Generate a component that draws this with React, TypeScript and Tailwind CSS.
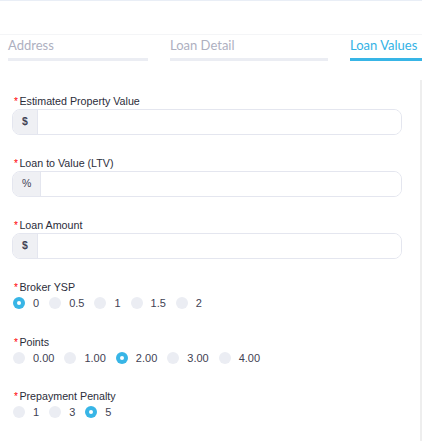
import React from "react";

const Req = () => (
  <span className="text-[#ff0000] text-[10px] leading-[10px] mr-[1.5px] relative top-[1px]">*</span>
);

function Label({ text }: { text: string }) {
  return (
    <div className="flex items-center h-[14px] leading-[14px] text-[10.7px] text-[#2b2d3a] pl-[2px]">
      <Req />
      <span>{text}</span>
    </div>
  );
}

function PrefixInput({ label, prefix, bold }: { label: string; prefix: string; bold?: boolean }) {
  return (
    <div>
      <Label text={label} />
      <div className="mt-[1px] h-[26px] flex border border-[#e4e6ef] rounded-[8px] overflow-hidden">
        <div
          className={`bg-[#eff0f4] px-[9px] flex items-center border-r border-[#e4e6ef] text-[10.5px] text-[#3f4254] ${bold ? "font-bold" : ""}`}
        >
          {prefix}
        </div>
        <div className="flex-1 bg-white" />
      </div>
    </div>
  );
}

function RadioGroup({ label, options, checked, className }: { label: string; options: string[]; checked: number; className?: string }) {
  return (
    <div className={className}>
      <Label text={label} />
      <div className="mt-[2px] h-[14px] flex items-center pl-[1px] text-[11px] text-[#3f4254]">
        {options.map((o, i) => (
          <div key={o} className="flex items-center">
            {i === checked ? (
              <span className="w-3 h-3 rounded-full bg-[#38b5e6] flex items-center justify-center">
                <span className="w-[4px] h-[4px] rounded-full bg-white" />
              </span>
            ) : (
              <span className="w-3 h-3 rounded-full bg-[#ebedf3]" />
            )}
            <span className="ml-[8px] mr-[10px]">{o}</span>
          </div>
        ))}
      </div>
    </div>
  );
}

export default function App() {
  return (
    <div
      className="w-[422px] h-[441px] overflow-hidden bg-white"
      style={{ fontFamily: '"Liberation Sans", Arial, sans-serif' }}
    >
      <div className="h-[35px] border-t border-[#e9eef6] border-b border-b-[#f4f5f7]" />
      <div className="flex pl-[8px] gap-[22px] pt-[1px] whitespace-nowrap" style={{ fontFamily: 'Lato, "Open Sans", sans-serif' }}>
        <div className="w-[140px] shrink-0">
          <div className="h-[18px] leading-[18px] text-[13px] text-[#aeb0bf]">Address</div>
          <div className="mt-[4px] h-[3px] bg-[#ebedf3]" />
        </div>
        <div className="w-[158px] shrink-0">
          <div className="h-[18px] leading-[18px] text-[13px] text-[#aeb0bf]">Loan Detail</div>
          <div className="mt-[4px] h-[3px] bg-[#ebedf3]" />
        </div>
        <div className="w-[158px] shrink-0">
          <div className="h-[18px] leading-[18px] text-[13px] text-[#33b2e5]">Loan Values</div>
          <div className="mt-[4px] h-[3px] bg-[#38b5e6]" />
        </div>
      </div>
      <div className="mt-[19px] h-[400px] border-r-2 border-[#eeeeee] pl-[12px] pr-[18px] pt-[14px] flex flex-col">
        <PrefixInput label="Estimated Property Value" prefix="$" bold />
        <div className="mt-[21px]">
          <PrefixInput label="Loan to Value (LTV)" prefix="%" />
        </div>
        <div className="mt-[21px]">
          <PrefixInput label="Loan Amount" prefix="$" bold />
        </div>
        <RadioGroup className="mt-[21px]" label="Broker YSP" options={["0", "0.5", "1", "1.5", "2"]} checked={0} />
        <RadioGroup className="mt-[25px]" label="Points" options={["0.00", "1.00", "2.00", "3.00", "4.00"]} checked={2} />
        <RadioGroup className="mt-[24px]" label="Prepayment Penalty" options={["1", "3", "5"]} checked={2} />
      </div>
    </div>
  );
}
